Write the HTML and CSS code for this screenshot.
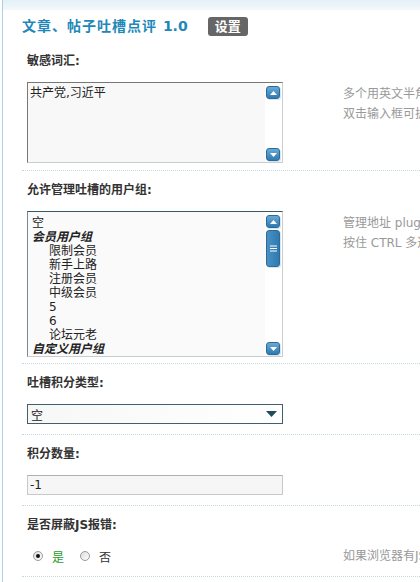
FILE: index.html
```html
<!DOCTYPE html>
<html lang="zh-CN">
<head>
    <meta charset="UTF-8">
    <title>文章、帖子吐槽点评 设置</title>
    <link rel="stylesheet" href="styles.css">
</head>
<body>
    <div class="page">
        <div class="topbar"></div>
        <div class="main">
            <h3 class="title">文章、帖子吐槽点评 <span class="ver">1.0</span><span class="badge">设置</span></h3>

            <div class="item">
                <div class="item-label">敏感词汇:</div>
                <div class="item-body">
                    <div class="area">
                        <textarea class="area-text">共产党,习近平</textarea>
                        <div class="scroll">
                            <span class="sbtn"><svg width="7" height="4" viewBox="0 0 7 4"><path d="M0 4 L3.5 0 L7 4 Z" fill="#fff"/></svg></span>
                            <span class="sbtn"><svg width="7" height="4" viewBox="0 0 7 4"><path d="M0 0 L3.5 4 L7 0 Z" fill="#fff"/></svg></span>
                        </div>
                    </div>
                    <div class="tips">多个用英文半角逗号分隔<br>双击输入框可扩大/缩小</div>
                </div>
            </div>

            <div class="item item-tight">
                <div class="item-label">允许管理吐槽的用户组:</div>
                <div class="item-body">
                    <div class="listbox">
                        <div class="options">
                            <div class="opt">空</div>
                            <div class="opt group">会员用户组</div>
                            <div class="opt sub">限制会员</div>
                            <div class="opt sub">新手上路</div>
                            <div class="opt sub">注册会员</div>
                            <div class="opt sub">中级会员</div>
                            <div class="opt sub">5</div>
                            <div class="opt sub">6</div>
                            <div class="opt sub">论坛元老</div>
                            <div class="opt group">自定义用户组</div>
                        </div>
                        <div class="scroll">
                            <div class="scroll-top">
                                <span class="sbtn"><svg width="7" height="4" viewBox="0 0 7 4"><path d="M0 4 L3.5 0 L7 4 Z" fill="#fff"/></svg></span>
                                <span class="thumb"><svg width="7" height="7" viewBox="0 0 7 7"><path d="M0 1 H7 M0 3.5 H7 M0 6 H7" stroke="#fff" stroke-width="1"/></svg></span>
                            </div>
                            <span class="sbtn"><svg width="7" height="4" viewBox="0 0 7 4"><path d="M0 0 L3.5 4 L7 0 Z" fill="#fff"/></svg></span>
                        </div>
                    </div>
                    <div class="tips">管理地址 plugin.php?id=tucao:admin<br>按住 CTRL 多选</div>
                </div>
            </div>

            <div class="item item-wide">
                <div class="item-label">吐槽积分类型:</div>
                <div class="item-body">
                    <div class="select">
                        <span>空</span>
                        <svg width="11" height="6" viewBox="0 0 11 6"><path d="M0 0 L5.5 6 L11 0 Z" fill="#1f4b5e"/></svg>
                    </div>
                    <div class="tips"></div>
                </div>
            </div>

            <div class="item item-wide">
                <div class="item-label">积分数量:</div>
                <div class="item-body">
                    <input class="text-input" type="text" value="-1">
                    <div class="tips"></div>
                </div>
            </div>

            <div class="item item-wide">
                <div class="item-label">是否屏蔽JS报错:</div>
                <div class="item-body">
                    <div class="radios">
                        <label class="radio checked"><span class="dot"></span><span class="yes">是</span></label>
                        <label class="radio"><span class="dot"></span><span>否</span></label>
                    </div>
                    <div class="tips tips-inline">如果浏览器有JS报错，可以选择屏蔽</div>
                </div>
            </div>
        </div>
    </div>
</body>
</html>
```

FILE: styles.css
```css
* {
    margin: 0;
    padding: 0;
    box-sizing: border-box;
}

body {
    width: 100vw;
    height: 100vh;
    overflow: hidden;
    background: #fff;
    font-family: Tahoma, "DejaVu Sans", "Noto Sans CJK SC", sans-serif;
    font-size: 12px;
    color: #333;
}

.page {
    width: 820px;
    min-height: 100vh;
    margin-left: 2px;
    border-left: 1px solid #a9d3e3;
}

.topbar {
    height: 10px;
    background: linear-gradient(to bottom, #e4f0f8, #f3f8fb);
}

.main {
    padding-left: 19px;
}

/* Title */
.title {
    height: 32px;
    line-height: 32px;
    font-size: 14px;
    letter-spacing: 1px;
    color: #2187b8;
    display: flex;
    align-items: center;
    white-space: pre;
}

.title .ver {
    font-family: "DejaVu Sans", sans-serif;
    letter-spacing: 0;
}

.badge {
    margin-left: 20px;
    height: 19px;
    line-height: 19px;
    padding: 0 7px;
    background: #666;
    color: #fff;
    font-size: 13px;
    letter-spacing: 0;
    border-radius: 3px;
}

/* Setting rows */
.item {
    padding-left: 5px;
    padding-bottom: 7px;
    border-bottom: 1px dotted #c4d9e3;
}

.item-tight {
    padding-bottom: 6px;
}

.item-wide {
    padding-bottom: 10px;
}

.item-label {
    height: 40px;
    padding-top: 10px;
    line-height: 18px;
    font-weight: bold;
    color: #333;
}

.item-body {
    display: flex;
    align-items: flex-start;
}

.tips {
    margin-left: 60px;
    padding-top: 2px;
    line-height: 20px;
    color: #999;
    white-space: nowrap;
}

.tips-inline {
    padding-top: 0;
}

/* Textarea */
.area {
    display: flex;
    width: 256px;
    height: 81px;
    border: 1px solid #ccc;
    border-top-color: #777;
    border-left-color: #777;
    background: #fff;
}

.area-text {
    flex: 1;
    border: none;
    outline: none;
    resize: none;
    overflow: hidden;
    padding: 2px 2px;
    background: #f8f8f8;
    font-family: "DejaVu Sans", "Noto Sans CJK SC", sans-serif;
    font-size: 12px;
    line-height: 16px;
    color: #222;
}

.scroll {
    width: 17px;
    padding: 3px 2px 1px 1px;
    display: flex;
    flex-direction: column;
    justify-content: space-between;
    background: #fff;
}

.scroll-top {
    display: flex;
    flex-direction: column;
    gap: 2px;
}

.sbtn,
.thumb {
    width: 14px;
    height: 13px;
    display: flex;
    align-items: center;
    justify-content: center;
    background: linear-gradient(to bottom, #6aa9d6, #2f7ab0);
    border: 1px solid #2a6b9a;
    border-radius: 3px;
    box-shadow: 1px 1px 0 #d6e6f0;
}

.thumb {
    height: 37px;
    background: linear-gradient(to right, #4a90c4, #2f7ab0);
}

/* Multi select */
.listbox {
    display: flex;
    width: 256px;
    height: 146px;
    border: 1px solid #ccc;
    border-top-color: #3a5866;
    border-left-color: #7a8a90;
    background: #fff;
}

.options {
    flex: 1;
    padding: 4px 0 0 4px;
    background: #fafafa;
    font-family: "DejaVu Sans", "Noto Sans CJK SC", sans-serif;
}

.opt {
    height: 14px;
    line-height: 14px;
    color: #222;
    white-space: nowrap;
}

.opt.group {
    font-weight: bold;
    font-style: italic;
}

.opt.sub {
    padding-left: 17px;
}

/* Single select */
.select {
    width: 256px;
    height: 20px;
    display: flex;
    align-items: center;
    justify-content: space-between;
    padding: 0 5px 0 3px;
    border: 1px solid #40606e;
    background: linear-gradient(to right, #f7f7f7, #fff);
    color: #222;
}

/* Text input */
.text-input {
    width: 256px;
    height: 20px;
    padding: 0 2px;
    border: 1px solid #c8c8c8;
    border-top-color: #b0b0b0;
    background: #f6f6f6;
    font-family: "DejaVu Sans", sans-serif;
    font-size: 12px;
    color: #222;
    outline: none;
}

/* Radios */
.radios {
    width: 256px;
    height: 20px;
    display: flex;
    align-items: center;
    padding-left: 6px;
    gap: 16px;
}

.radio {
    display: flex;
    align-items: center;
    gap: 9px;
}

.dot {
    width: 10px;
    height: 10px;
    border: 1px solid #9a9a9a;
    border-radius: 50%;
    background: linear-gradient(135deg, #ddd, #fff);
    display: flex;
    align-items: center;
    justify-content: center;
}

.radio.checked .dot::after {
    content: '';
    width: 4px;
    height: 4px;
    border-radius: 50%;
    background: #111;
}

.yes {
    color: #2a9d2a;
}
```
